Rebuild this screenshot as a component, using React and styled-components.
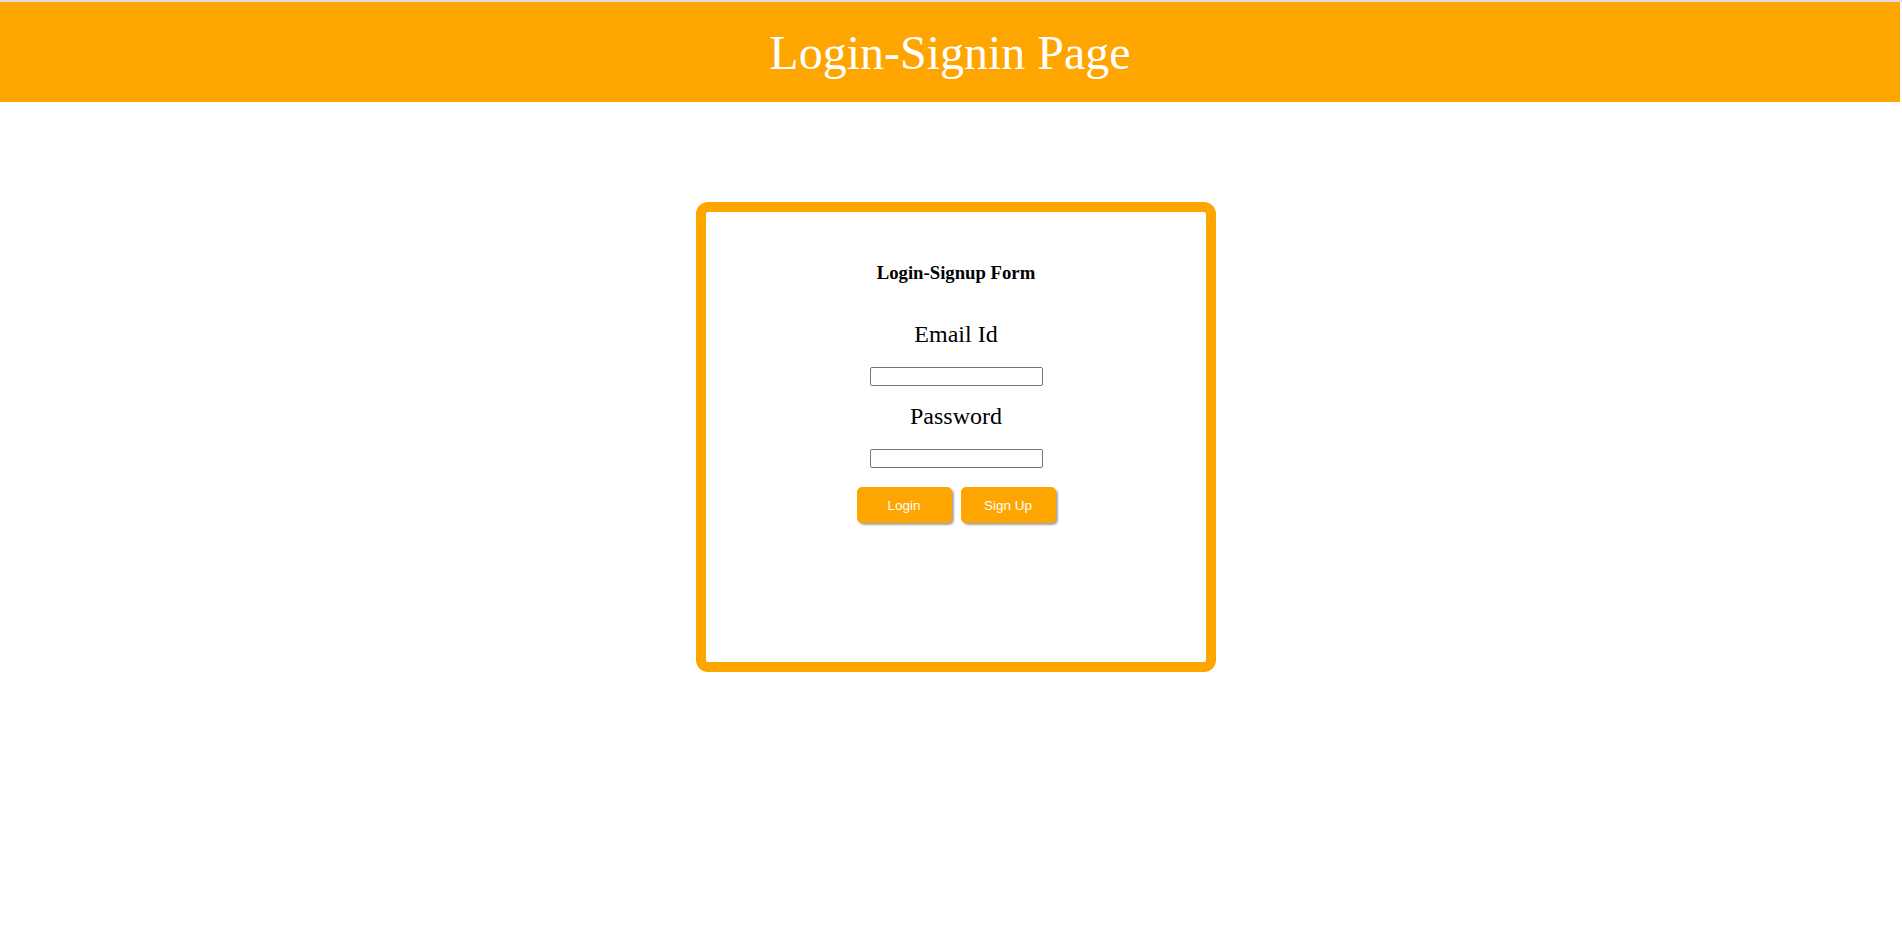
import React, { useState } from 'react'
import styled, { createGlobalStyle } from 'styled-components'

const GlobalStyle = createGlobalStyle`
  html, body {
    margin: 0;
    padding: 0;
    background: #fff;
  }
  body {
    border-top: 2px solid #dedede;
    font-family: "Liberation Serif", "Times New Roman", serif;
  }
`

const Header = styled.header`
  height: 100px;
  margin-right: 2px;
  background: orange;
  display: flex;
  align-items: center;
  justify-content: center;
  h1 {
    margin: 0;
    font-size: 48px;
    font-weight: normal;
    color: #fff;
  }
`

const Main = styled.main`
  display: flex;
  justify-content: center;
  padding-left: 10px;
  margin-top: 100px;
`

const FormBox = styled.form`
  box-sizing: border-box;
  width: 520px;
  height: 470px;
  border: 10px solid orange;
  border-radius: 12px;
  padding-top: 50px;
  display: flex;
  flex-direction: column;
  align-items: center;
`

const Title = styled.h3`
  margin: 0;
  font-size: 18.72px;
  font-weight: bold;
  color: #000;
`

const Label = styled.label`
  display: block;
  margin-top: ${props => props.gap}px;
  font-size: 24px;
  color: #000;
`

const Input = styled.input`
  box-sizing: border-box;
  width: 173px;
  height: 19px;
  margin-top: ${props => props.gap}px;
  padding: 1px 2px;
  border: 1px solid #767676;
  border-radius: 2px;
  font-family: "Liberation Sans", Arial, sans-serif;
  font-size: 13.33px;
  outline: none;
`

const Buttons = styled.div`
  display: flex;
  gap: 9px;
  margin-top: 19px;
`

const Button = styled.button`
  width: 95px;
  height: 36px;
  border: none;
  border-radius: 5px;
  background: orange;
  color: #fff;
  font-family: "Liberation Sans", Arial, sans-serif;
  font-size: 13.5px;
  box-shadow: 2px 2px 2px rgba(0, 0, 0, 0.35);
  cursor: pointer;
`

function App() {
  const [email, setEmail] = useState('')
  const [password, setPassword] = useState('')

  const handleSubmit = event => {
    event.preventDefault()
  }

  return (
    <>
      <GlobalStyle />
      <Header>
        <h1>Login-Signin Page</h1>
      </Header>
      <Main>
        <FormBox onSubmit={handleSubmit}>
          <Title>Login-Signup Form</Title>
          <Label htmlFor="email" gap={37}>Email Id</Label>
          <Input
            id="email"
            type="text"
            gap={19}
            value={email}
            onChange={e => setEmail(e.target.value)}
          />
          <Label htmlFor="password" gap={17}>Password</Label>
          <Input
            id="password"
            type="password"
            gap={19}
            value={password}
            onChange={e => setPassword(e.target.value)}
          />
          <Buttons>
            <Button type="submit">Login</Button>
            <Button type="button">Sign Up</Button>
          </Buttons>
        </FormBox>
      </Main>
    </>
  )
}

export default App
